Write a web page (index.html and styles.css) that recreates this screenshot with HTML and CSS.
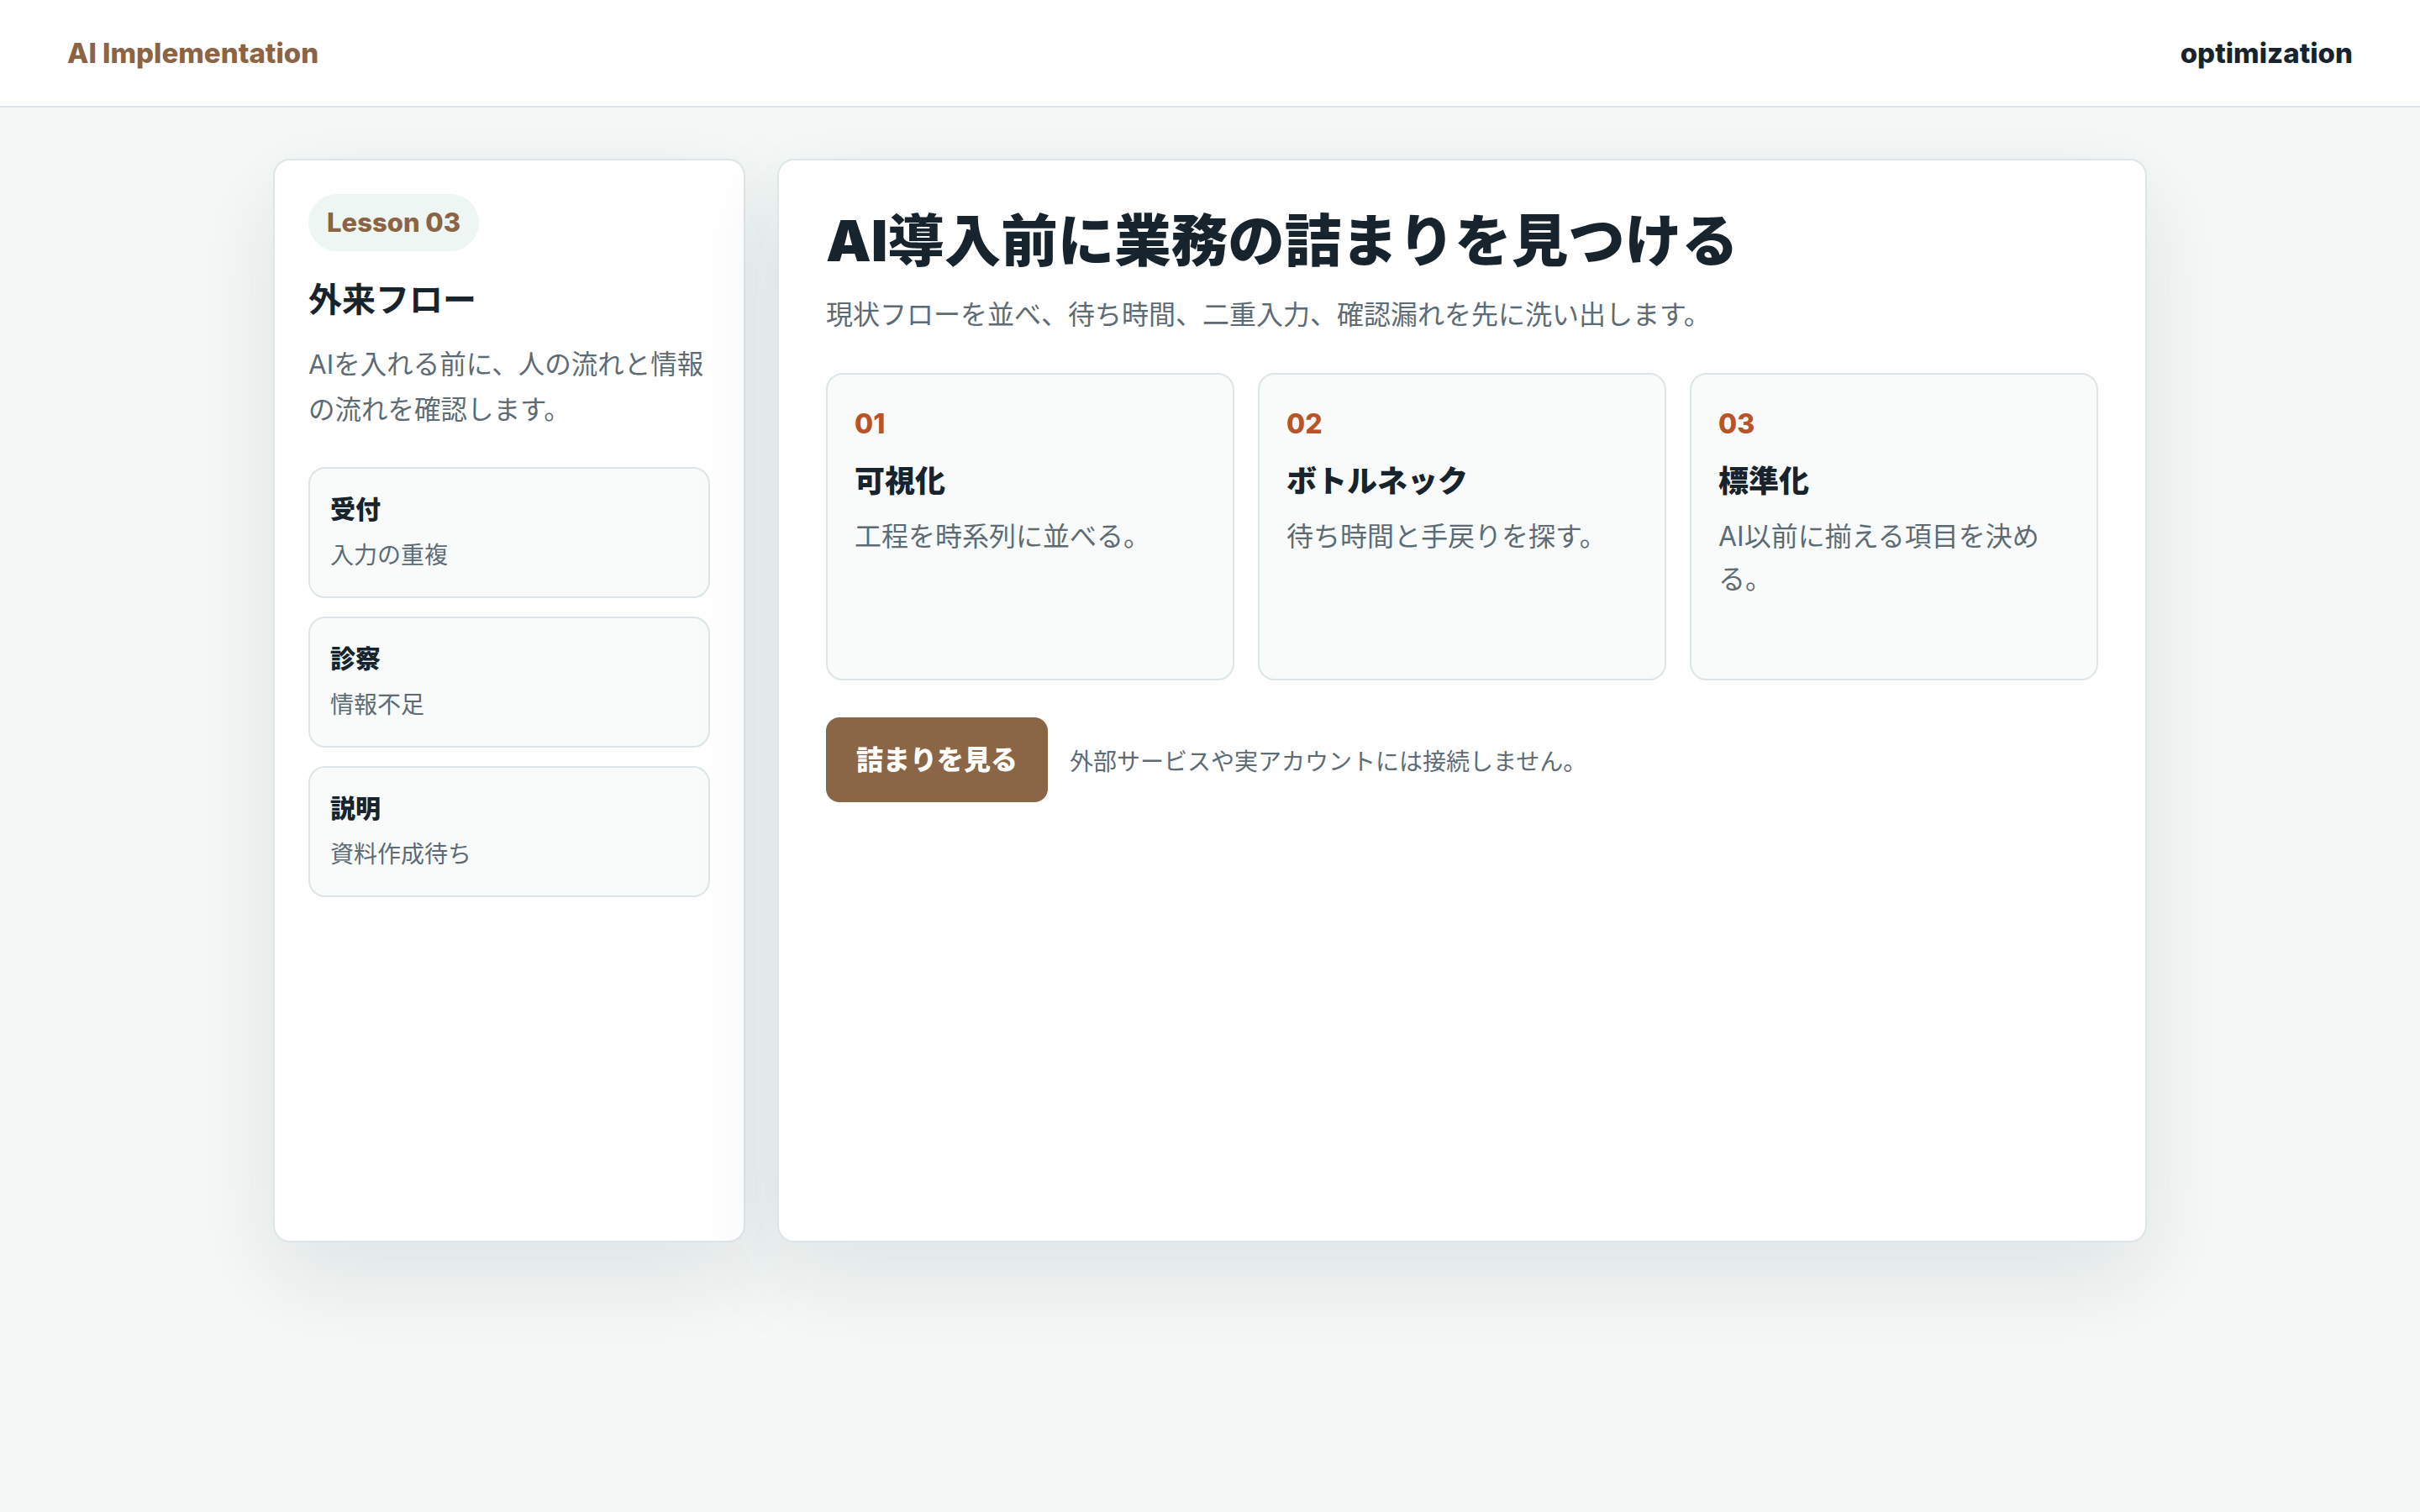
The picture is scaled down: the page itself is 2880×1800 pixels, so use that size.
FILE: index.html
```html
<!DOCTYPE html>
<html lang="ja">
<head>
  <meta charset="UTF-8">
  <meta name="viewport" content="width=device-width, initial-scale=1.0">
  <title>AI Implementation - Lesson 03</title>
  <link rel="stylesheet" href="styles.css">
</head>
<body>
  <header class="topbar">
    <span class="brand">AI Implementation</span>
    <span class="topic">optimization</span>
  </header>

  <main class="layout">
    <aside class="side">
      <span class="badge">Lesson 03</span>
      <h2 class="side-title">外来フロー</h2>
      <p class="side-text">AIを入れる前に、人の流れと情報の流れを確認します。</p>
      <ul class="steps">
        <li class="step"><strong>受付</strong><span>入力の重複</span></li>
        <li class="step"><strong>診察</strong><span>情報不足</span></li>
        <li class="step"><strong>説明</strong><span>資料作成待ち</span></li>
      </ul>
    </aside>

    <section class="panel">
      <h1>AI導入前に業務の詰まりを見つける</h1>
      <p class="lead">現状フローを並べ、待ち時間、二重入力、確認漏れを先に洗い出します。</p>

      <div class="cards">
        <div class="card">
          <span class="num">01</span>
          <h3>可視化</h3>
          <p>工程を時系列に並べる。</p>
        </div>
        <div class="card">
          <span class="num">02</span>
          <h3>ボトルネック</h3>
          <p>待ち時間と手戻りを探す。</p>
        </div>
        <div class="card">
          <span class="num">03</span>
          <h3>標準化</h3>
          <p>AI以前に揃える項目を決める。</p>
        </div>
      </div>

      <div class="actions">
        <button class="btn" type="button">詰まりを見る</button>
        <span class="note">外部サービスや実アカウントには接続しません。</span>
      </div>
    </section>
  </main>
</body>
</html>
```

FILE: styles.css
```css
* {
  box-sizing: border-box;
}
body {
  margin: 0;
  min-height: 100vh;
  background: #f4f8f7;
  color: #17242d;
  font-family: Inter, "Noto Sans CJK JP", sans-serif;
}
.topbar {
  height: 128px;
  padding: 0 80px;
  display: flex;
  align-items: center;
  justify-content: space-between;
  background: #fff;
  border-bottom: 2px solid #dce6e8;
  font-size: 33px;
  font-weight: 800;
}
.brand {
  color: #8a6445;
}
.topic {
  color: #17242d;
}

.layout {
  width: 2230px;
  margin: 61px auto 0;
  display: grid;
  grid-template-columns: 562px 1fr;
  gap: 38px;
  min-height: 1290px;
}
.side, .panel {
  background: #fff;
  border: 2px solid #dce6e9;
  border-radius: 20px;
  box-shadow: 0 40px 110px rgba(30, 55, 60, 0.1);
}
.side {
  padding: 40px;
}
.badge {
  display: inline-block;
  padding: 16px 22px;
  border-radius: 40px;
  background: #edf6f2;
  color: #8a6445;
  font-size: 31px;
  font-weight: 800;
  line-height: 36px;
}
.side-title {
  margin: 30px 0 0;
  font-size: 40px;
  line-height: 56px;
}
.side-text {
  margin: 22px 0 0;
  color: #5d6b75;
  font-size: 31.5px;
  line-height: 54px;
}
.steps {
  list-style: none;
  margin: 41px 0 0;
  padding: 0;
  display: flex;
  flex-direction: column;
  gap: 22px;
}
.step {
  display: flex;
  flex-direction: column;
  padding: 26px 24px;
  background: #f9fbfb;
  border: 2px solid #dce6e9;
  border-radius: 20px;
}
.step strong {
  font-size: 30px;
  line-height: 44px;
  font-weight: 800;
}
.step span {
  margin-top: 10px;
  color: #5d6b75;
  font-size: 28px;
  line-height: 46px;
}

.panel {
  padding: 56px;
}
.panel h1 {
  margin: 0;
  font-size: 67.5px;
  line-height: 80px;
  font-weight: 900;
}
.lead {
  margin: 22px 0 0;
  color: #5d6b75;
  font-size: 32px;
  line-height: 51px;
}
.cards {
  margin-top: 44px;
  display: grid;
  grid-template-columns: repeat(3, 1fr);
  gap: 28px;
}
.card {
  min-height: 366px;
  padding: 38px 32px 36px;
  background: #f9fbfb;
  border: 2px solid #dce6e9;
  border-radius: 20px;
}
.num {
  display: block;
  color: #b9542a;
  font-size: 32px;
  font-weight: 800;
  line-height: 42px;
}
.card h3 {
  margin: 22px 0 0;
  font-size: 36px;
  line-height: 50px;
  font-weight: 800;
}
.card p {
  margin: 15px 0 0;
  color: #5d6b75;
  font-size: 32px;
  line-height: 51px;
}
.actions {
  margin-top: 44px;
  display: flex;
  align-items: center;
  gap: 26px;
}
.btn {
  padding: 28px 36px;
  border: 0;
  border-radius: 16px;
  background: #8a6546;
  color: #fff;
  font-family: inherit;
  font-size: 32px;
  font-weight: 900;
  line-height: 45px;
  cursor: pointer;
}
.note {
  color: #5d6b75;
  font-size: 28px;
}
```
